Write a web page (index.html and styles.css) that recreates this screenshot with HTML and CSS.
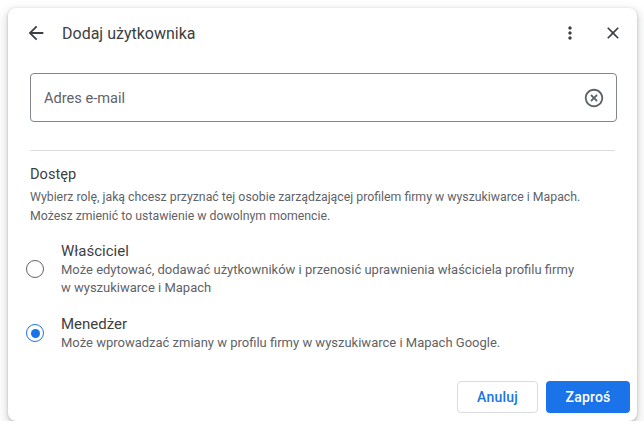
FILE: index.html
```html
<!DOCTYPE html>
<html>
<head>
    <meta charset='utf-8'>
    <title>Dodaj użytkownika</title>
    <link rel="stylesheet" href="styles.css">
</head>
<body>
    <div class='dialog'>
        <div class='header'>
            <div class='icon-btn back'>
                <svg width="22" height="22" viewBox="0 0 24 24"><path d="M20 11H7.83l5.59-5.59L12 4l-8 8 8 8 1.41-1.41L7.83 13H20v-2z" fill="#3c4043"/></svg>
            </div>
            <div class='title'>Dodaj użytkownika</div>
            <div class='icon-btn more'>
                <svg width="20" height="20" viewBox="0 0 24 24"><path d="M12 8c1.1 0 2-.9 2-2s-.9-2-2-2-2 .9-2 2 .9 2 2 2zm0 2c-1.1 0-2 .9-2 2s.9 2 2 2 2-.9 2-2-.9-2-2-2zm0 6c-1.1 0-2 .9-2 2s.9 2 2 2 2-.9 2-2-.9-2-2-2z" fill="#3c4043"/></svg>
            </div>
            <div class='icon-btn close'>
                <svg width="20" height="20" viewBox="0 0 24 24"><path d="M19 6.41L17.59 5 12 10.590 6.41 5 5 6.41 10.59 12 5 17.59 6.41 19 12 13.41 17.59 19 19 17.59 13.41 12z" fill="#3c4043"/></svg>
            </div>
        </div>

        <div class='content'>
            <div class='field'>
                <span class='placeholder'>Adres e-mail</span>
                <svg width="22" height="22" viewBox="0 0 24 24"><path d="M14.59 8L12 10.59 9.41 8 8 9.41 10.59 12 8 14.59 9.41 16 12 13.41 14.59 16 16 14.59 13.41 12 16 9.41 14.59 8zM12 2C6.47 2 2 6.47 2 12s4.470 10 10 10 10-4.47 10-10S17.53 2 12 2zm0 18c-4.41 0-8-3.59-8-8s3.59-8 8-8 8 3.59 8 8-3.59 8-8 8z" fill="#5f6368"/></svg>
            </div>

            <div class='divider'></div>

            <div class='section-title'>Dostęp</div>
            <div class='section-desc'>Wybierz rolę, jaką chcesz przyznać tej osobie zarządzającej profilem firmy w wyszukiwarce i Mapach.<br>Możesz zmienić to ustawienie w dowolnym momencie.</div>

            <div class='option first'>
                <div class='radio-wrap'><div class='radio'></div></div>
                <div class='option-text'>
                    <div class='option-label'>Właściciel</div>
                    <div class='option-desc'>Może edytować, dodawać użytkowników i przenosić uprawnienia właściciela profilu firmy<br>w wyszukiwarce i Mapach</div>
                </div>
            </div>
            <div class='option'>
                <div class='radio-wrap'><div class='radio checked'></div></div>
                <div class='option-text'>
                    <div class='option-label'>Menedżer</div>
                    <div class='option-desc'>Może wprowadzać zmiany w profilu firmy w wyszukiwarce i Mapach Google.</div>
                </div>
            </div>
        </div>

        <div class='footer'>
            <div class='btn outline'>Anuluj</div>
            <div class='btn primary'>Zaproś</div>
        </div>
    </div>
</body>
</html>
```

FILE: styles.css
```css
body {
    margin: 0;
    padding: 0;
    background-color: #fff;
    font-family: Roboto, "Liberation Sans", sans-serif;
    color: #3c4043;
}
.dialog {
    margin: 8px 0 0 8px;
    width: 629px;
    height: 413px;
    box-sizing: border-box;
    background-color: #fff;
    border-radius: 8px;
    box-shadow: 0 1px 3px rgba(60, 64, 67, 0.3), 0 4px 8px 3px rgba(60, 64, 67, 0.15);
    display: flex;
    flex-direction: column;
}
.header {
    display: flex;
    align-items: center;
    height: 50px;
    padding: 0 12px 0 16px;
}
.icon-btn {
    width: 24px;
    height: 24px;
    display: flex;
    justify-content: center;
    align-items: center;
}
.title {
    flex: 1;
    margin-left: 14px;
    font-size: 16px;
    color: #3c4043;
}
.more {
    margin-right: 19px;
}
.content {
    padding: 0 20px 0 22px;
}
.field {
    margin-top: 15px;
    height: 49px;
    box-sizing: border-box;
    border: 1px solid #80868b;
    border-radius: 4px;
    display: flex;
    align-items: center;
    justify-content: space-between;
    padding: 0 11px 0 13px;
}
.placeholder {
    font-size: 14.6px;
    color: #5f6368;
}
.divider {
    margin: 28px 2px 0 0;
    height: 1px;
    background-color: #dadce0;
}
.section-title {
    margin-top: 13px;
    font-size: 14.6px;
    line-height: 20px;
    color: #3c4043;
}
.section-desc {
    margin-top: 4px;
    font-size: 12.3px;
    line-height: 19px;
    color: #5f6368;
}
.option {
    display: flex;
    align-items: center;
    margin-left: -15px;
    margin-top: 17px;
}
.option.first {
    margin-top: 15px;
}
.radio-wrap {
    width: 40px;
    display: flex;
    justify-content: center;
    margin-right: 6px;
}
.radio {
    width: 18px;
    height: 18px;
    box-sizing: border-box;
    border: 1.6px solid #5f6368;
    border-radius: 50%;
    display: flex;
    justify-content: center;
    align-items: center;
}
.radio.checked {
    border-color: #1a73e8;
}
.radio.checked::after {
    content: '';
    width: 9px;
    height: 9px;
    border-radius: 50%;
    background-color: #1a73e8;
}
.option-label {
    font-size: 15px;
    line-height: 20px;
    color: #3c4043;
}
.option-desc {
    font-size: 13px;
    line-height: 18px;
    color: #5f6368;
}
.footer {
    margin-top: auto;
    display: flex;
    justify-content: flex-end;
    gap: 8px;
    padding: 0 7px 8px 0;
}
.btn {
    height: 32px;
    box-sizing: border-box;
    border-radius: 4px;
    display: flex;
    justify-content: center;
    align-items: center;
    font-size: 14px;
    font-weight: 500;
    letter-spacing: 0.2px;
}
.btn.outline {
    width: 81px;
    border: 1px solid #dadce0;
    color: #1a73e8;
}
.btn.primary {
    width: 84px;
    background-color: #1a73e8;
    color: #fff;
}
```
